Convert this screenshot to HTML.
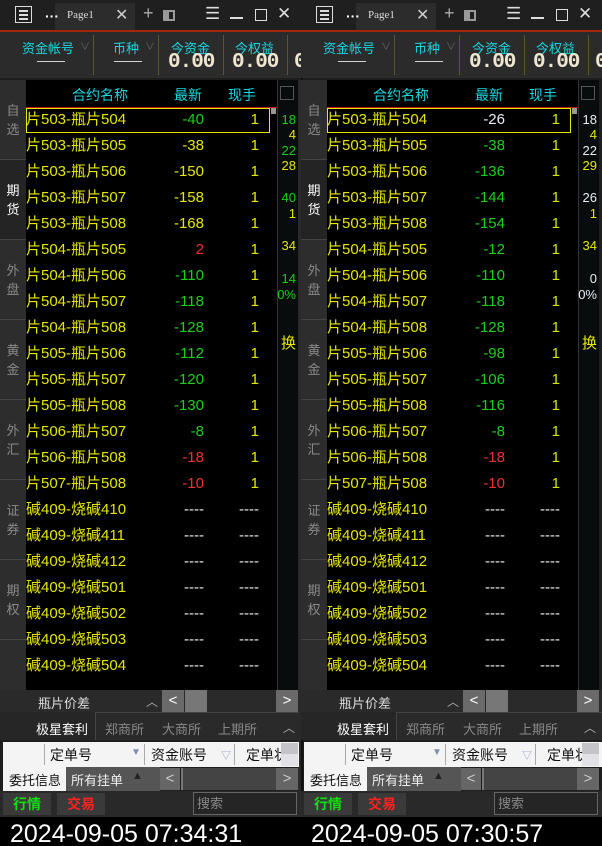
<!DOCTYPE html>
<html><head><meta charset="utf-8"><style>
*{margin:0;padding:0;box-sizing:border-box}
body{width:602px;height:846px;background:#000;position:relative;overflow:hidden;font-family:"Liberation Sans","Noto Sans CJK SC",sans-serif}
.p{position:absolute;top:0;width:301px;height:846px;overflow:hidden;background:#1e1e1e}
.a{position:absolute;white-space:nowrap}
.tb{left:0;top:0;width:301px;height:30px;background:#1f1f1f}
.red{left:0;top:30px;width:301px;height:2px;background:#a3260c}
.hd{left:0;top:32px;width:301px;height:46px;background:#2b2b2b}
.cy{color:#1ad6e0;font-size:13px}
.val{color:#efe6cf;font-size:21px;font-family:"Liberation Mono",monospace;font-weight:bold;letter-spacing:-1px}
.vd{width:1px;height:40px;top:35px;background:#5a5530}
.sb{left:0;top:80px;width:26px;height:610px;background:#2d2d2d}
.sbl{left:0;width:26px;height:80px;border-bottom:1px solid #444;color:#8a8a8a;font-size:13px;text-align:center;line-height:19px;padding-top:21px}
.tbl{left:26px;top:80px;width:251px;height:610px;background:#000}
.row{position:absolute;left:0;width:251px;height:26px;font-size:15px;line-height:26px}
.nm{position:absolute;left:0;color:#e6e600}
.v{position:absolute;right:73px;text-align:right}
.h{position:absolute;right:18px;text-align:right}
.g{color:#19d019}.y{color:#e6e600}.r{color:#f03030}.w{color:#e8eef5}
.nc{left:277px;top:80px;width:21px;height:610px;background:#080c0d;border-left:1px solid #333}
.nv{position:absolute;right:2px;font-size:13px}
.btn{background:#6a6a6a;color:#fff;text-align:center;font-size:15px;line-height:22px}
</style></head><body>

<!-- LEFT PANEL -->
<div class="p" style="left:0">
<div class="a tb"></div>
<div class="a" style="left:55px;top:3px;width:80px;height:27px;background:#2c2c2c"></div>
<div class="a" style="left:15px;top:6px;width:17px;height:17px;border:1.5px solid #ddd"></div>
<div class="a" style="left:19px;top:10px;width:9px;height:1.5px;background:#ddd;box-shadow:0 4px 0 #ddd,0 8px 0 #ddd"></div>
<div class="a" style="left:45px;top:8px;color:#fff;font-size:14px;font-weight:bold">···</div>
<div class="a" style="left:67px;top:9px;color:#ddd;font-size:11px;font-family:'Liberation Serif',serif">Page1</div>
<div class="a" style="left:115px;top:5px;color:#ccc;font-size:16px">✕</div>
<div class="a" style="left:143px;top:3px;color:#aaa;font-size:18px">+</div>
<div class="a" style="left:163px;top:10px;width:12px;height:11px;border:2px solid #999;border-left-width:6px"></div>
<div class="a" style="left:205px;top:4px;color:#ddd;font-size:17px">☰</div>
<div class="a" style="left:230px;top:17px;width:13px;height:2px;background:#ddd"></div>
<div class="a" style="left:255px;top:9px;width:12px;height:12px;border:1.5px solid #ddd"></div>
<div class="a" style="left:277px;top:4px;color:#ddd;font-size:17px">✕</div>
<div class="a red"></div>
<div class="a hd"></div>
<div class="a cy" style="left:22px;top:38px">资金帐号</div><div class="a" style="left:80px;top:38px;color:#666;font-size:10px">∨</div>
<div class="a" style="left:37px;top:52px;color:#ddd;font-size:14px">——</div>
<div class="a vd" style="left:93px"></div>
<div class="a cy" style="left:113px;top:38px">币种</div><div class="a" style="left:145px;top:38px;color:#666;font-size:10px">∨</div>
<div class="a" style="left:114px;top:52px;color:#ddd;font-size:14px">——</div>
<div class="a vd" style="left:158px"></div>
<div class="a cy" style="left:171px;top:38px">今资金</div>
<div class="a val" style="left:168px;top:51px">0.00</div>
<div class="a vd" style="left:223px"></div>
<div class="a cy" style="left:235px;top:38px">今权益</div>
<div class="a val" style="left:232px;top:51px">0.00</div>
<div class="a vd" style="left:287px"></div>
<div class="a val" style="left:294px;top:51px">0</div>

<div class="a sb">
<div class="a sbl" style="top:0">自<br>选</div>
<div class="a sbl" style="top:80px;color:#fff;background:#242424">期<br>货</div>
<div class="a sbl" style="top:160px">外<br>盘</div>
<div class="a sbl" style="top:240px">黄<br>金</div>
<div class="a sbl" style="top:320px">外<br>汇</div>
<div class="a sbl" style="top:400px">证<br>券</div>
<div class="a sbl" style="top:480px">期<br>权</div>
</div>

<div class="a tbl">
<div class="a cy" style="left:46px;top:5px;font-size:14px">合约名称</div>
<div class="a cy" style="left:148px;top:5px;font-size:14px">最新</div>
<div class="a cy" style="left:202px;top:5px;font-size:14px">现手</div>
<div class="a" style="left:0;top:27px;width:251px;height:1px;background:#c01818"></div>
<div class="a" style="left:245px;top:28px;width:5px;height:6px;background:#999"></div>
<div class="a" style="left:0;top:28px;width:244px;height:25px;border:1px solid #e6e600"></div>
<div class="row" style="top:27px"><span class="nm">片503-瓶片504</span><span class="v g">-40</span><span class="h y">1</span></div>
<div class="row" style="top:53px"><span class="nm">片503-瓶片505</span><span class="v y">-38</span><span class="h y">1</span></div>
<div class="row" style="top:79px"><span class="nm">片503-瓶片506</span><span class="v y">-150</span><span class="h y">1</span></div>
<div class="row" style="top:105px"><span class="nm">片503-瓶片507</span><span class="v y">-158</span><span class="h y">1</span></div>
<div class="row" style="top:131px"><span class="nm">片503-瓶片508</span><span class="v y">-168</span><span class="h y">1</span></div>
<div class="row" style="top:157px"><span class="nm">片504-瓶片505</span><span class="v r">2</span><span class="h y">1</span></div>
<div class="row" style="top:183px"><span class="nm">片504-瓶片506</span><span class="v g">-110</span><span class="h y">1</span></div>
<div class="row" style="top:209px"><span class="nm">片504-瓶片507</span><span class="v g">-118</span><span class="h y">1</span></div>
<div class="row" style="top:235px"><span class="nm">片504-瓶片508</span><span class="v g">-128</span><span class="h y">1</span></div>
<div class="row" style="top:261px"><span class="nm">片505-瓶片506</span><span class="v g">-112</span><span class="h y">1</span></div>
<div class="row" style="top:287px"><span class="nm">片505-瓶片507</span><span class="v g">-120</span><span class="h y">1</span></div>
<div class="row" style="top:313px"><span class="nm">片505-瓶片508</span><span class="v g">-130</span><span class="h y">1</span></div>
<div class="row" style="top:339px"><span class="nm">片506-瓶片507</span><span class="v g">-8</span><span class="h y">1</span></div>
<div class="row" style="top:365px"><span class="nm">片506-瓶片508</span><span class="v r">-18</span><span class="h y">1</span></div>
<div class="row" style="top:391px"><span class="nm">片507-瓶片508</span><span class="v r">-10</span><span class="h y">1</span></div>
<div class="row" style="top:417px"><span class="nm">碱409-烧碱410</span><span class="v w">----</span><span class="h w">----</span></div>
<div class="row" style="top:443px"><span class="nm">碱409-烧碱411</span><span class="v w">----</span><span class="h w">----</span></div>
<div class="row" style="top:469px"><span class="nm">碱409-烧碱412</span><span class="v w">----</span><span class="h w">----</span></div>
<div class="row" style="top:495px"><span class="nm">碱409-烧碱501</span><span class="v w">----</span><span class="h w">----</span></div>
<div class="row" style="top:521px"><span class="nm">碱409-烧碱502</span><span class="v w">----</span><span class="h w">----</span></div>
<div class="row" style="top:547px"><span class="nm">碱409-烧碱503</span><span class="v w">----</span><span class="h w">----</span></div>
<div class="row" style="top:573px"><span class="nm">碱409-烧碱504</span><span class="v w">----</span><span class="h w">----</span></div>
</div>

<div class="a nc">
<div class="a" style="left:2px;top:6px;width:14px;height:14px;border:1px solid #555"></div>
<div class="nv g" style="top:32px">18</div>
<div class="nv y" style="top:47px">4</div>
<div class="nv g" style="top:63px">22</div>
<div class="nv y" style="top:78px">28</div>
<div class="nv g" style="top:110px">40</div>
<div class="nv y" style="top:126px">1</div>
<div class="nv y" style="top:158px">34</div>
<div class="nv g" style="top:191px">14</div>
<div class="nv g" style="top:207px">0%</div>
<div class="nv y" style="top:252px;font-size:15px">换</div>
</div>
<div class="a" style="left:298px;top:80px;width:3px;height:766px;background:#2a2a2a"></div>

<div class="a" style="left:0;top:690px;width:299px;height:22px;background:#2a2a2a"></div>
<div class="a" style="left:38px;top:693px;color:#ddd;font-size:13px">瓶片价差</div>
<div class="a" style="left:146px;top:693px;color:#aaa;font-size:12px">︿</div>
<div class="a btn" style="left:162px;top:690px;width:22px;height:22px">&lt;</div>
<div class="a" style="left:185px;top:690px;width:22px;height:22px;background:#777"></div>
<div class="a btn" style="left:276px;top:690px;width:22px;height:22px">&gt;</div>
<div class="a" style="left:0;top:712px;width:299px;height:28px;background:#262626"></div>
<div class="a" style="left:95px;top:712px;width:204px;height:28px;background:#2a2a2a;border-top:1px solid #444;border-left:1px solid #444"></div>
<div class="a" style="left:36px;top:719px;color:#fff;font-size:13px">极星套利</div>
<div class="a" style="left:105px;top:719px;color:#888;font-size:13px">郑商所</div>
<div class="a" style="left:162px;top:719px;color:#888;font-size:13px">大商所</div>
<div class="a" style="left:218px;top:719px;color:#888;font-size:13px">上期所</div>
<div class="a" style="left:283px;top:719px;color:#aaa;font-size:12px">︿</div>
<div class="a" style="left:3px;top:742px;width:296px;height:25px;background:#f4f4f4"></div>
<div class="a" style="left:44px;top:744px;width:1px;height:21px;background:#aaa"></div>
<div class="a" style="left:50px;top:745px;color:#111;font-size:14px">定单号</div>
<div class="a" style="left:131px;top:747px;color:#7f8fb0;font-size:10px">▼</div>
<div class="a" style="left:144px;top:744px;width:1px;height:21px;background:#aaa"></div>
<div class="a" style="left:151px;top:745px;color:#111;font-size:14px">资金账号</div>
<div class="a" style="left:221px;top:747px;color:#8fa0c0;font-size:10px">▽</div>
<div class="a" style="left:234px;top:744px;width:1px;height:21px;background:#aaa"></div>
<div class="a" style="left:246px;top:745px;color:#111;font-size:14px;width:35px;overflow:hidden">定单状</div>
<div class="a" style="left:281px;top:743px;width:17px;height:11px;background:#c4c4c8"></div>
<div class="a" style="left:281px;top:754px;width:17px;height:12px;background:#e2e2e6"></div>
<div class="a" style="left:3px;top:767px;width:63px;height:24px;background:#f4f4f4"></div>
<div class="a" style="left:9px;top:770px;color:#111;font-size:13px">委托信息</div>
<div class="a" style="left:66px;top:767px;width:94px;height:24px;background:#555"></div>
<div class="a" style="left:71px;top:770px;color:#eee;font-size:13px">所有挂单</div>
<div class="a" style="left:132px;top:770px;color:#222;font-size:11px">▲</div>
<div class="a btn" style="left:160px;top:768px;width:20px;height:22px;background:#666;color:#ccc">&lt;</div>
<div class="a" style="left:181px;top:768px;width:95px;height:22px;background:#444;border-left:2px solid #777"></div>
<div class="a btn" style="left:276px;top:768px;width:22px;height:22px;background:#666;color:#ccc">&gt;</div>
<div class="a" style="left:0;top:791px;width:299px;height:26px;background:#292929"></div>
<div class="a" style="left:3px;top:793px;width:48px;height:22px;background:#3a3a3a;color:#10e010;font-size:14px;font-weight:bold;text-align:center;line-height:22px">行情</div>
<div class="a" style="left:57px;top:793px;width:48px;height:22px;background:#3a3a3a;color:#ff2020;font-size:14px;font-weight:bold;text-align:center;line-height:22px">交易</div>
<div class="a" style="left:193px;top:792px;width:104px;height:23px;border:1px solid #666;background:#252525;color:#888;font-size:13px;padding-left:3px;line-height:21px">搜索</div>
<div class="a" style="left:0;top:817px;width:301px;height:29px;background:#000"></div>
<div class="a" style="left:10px;top:820px;color:#fff;font-size:25px">2024-09-05 07:34:31</div>
</div>

<!-- RIGHT PANEL -->
<div class="p" style="left:301px">
<div class="a" style="left:0;top:0;width:2px;height:846px;background:#111"></div>
<div class="a tb"></div>
<div class="a" style="left:55px;top:3px;width:80px;height:27px;background:#2c2c2c"></div>
<div class="a" style="left:15px;top:6px;width:17px;height:17px;border:1.5px solid #ddd"></div>
<div class="a" style="left:19px;top:10px;width:9px;height:1.5px;background:#ddd;box-shadow:0 4px 0 #ddd,0 8px 0 #ddd"></div>
<div class="a" style="left:45px;top:8px;color:#fff;font-size:14px;font-weight:bold">···</div>
<div class="a" style="left:67px;top:9px;color:#ddd;font-size:11px;font-family:'Liberation Serif',serif">Page1</div>
<div class="a" style="left:115px;top:5px;color:#ccc;font-size:16px">✕</div>
<div class="a" style="left:143px;top:3px;color:#aaa;font-size:18px">+</div>
<div class="a" style="left:163px;top:10px;width:12px;height:11px;border:2px solid #999;border-left-width:6px"></div>
<div class="a" style="left:205px;top:4px;color:#ddd;font-size:17px">☰</div>
<div class="a" style="left:230px;top:17px;width:13px;height:2px;background:#ddd"></div>
<div class="a" style="left:255px;top:9px;width:12px;height:12px;border:1.5px solid #ddd"></div>
<div class="a" style="left:277px;top:4px;color:#ddd;font-size:17px">✕</div>
<div class="a red"></div>
<div class="a hd"></div>
<div class="a cy" style="left:22px;top:38px">资金帐号</div><div class="a" style="left:80px;top:38px;color:#666;font-size:10px">∨</div>
<div class="a" style="left:37px;top:52px;color:#ddd;font-size:14px">——</div>
<div class="a vd" style="left:93px"></div>
<div class="a cy" style="left:113px;top:38px">币种</div><div class="a" style="left:145px;top:38px;color:#666;font-size:10px">∨</div>
<div class="a" style="left:114px;top:52px;color:#ddd;font-size:14px">——</div>
<div class="a vd" style="left:158px"></div>
<div class="a cy" style="left:171px;top:38px">今资金</div>
<div class="a val" style="left:168px;top:51px">0.00</div>
<div class="a vd" style="left:223px"></div>
<div class="a cy" style="left:235px;top:38px">今权益</div>
<div class="a val" style="left:232px;top:51px">0.00</div>
<div class="a vd" style="left:287px"></div>
<div class="a val" style="left:294px;top:51px">0</div>

<div class="a sb">
<div class="a sbl" style="top:0">自<br>选</div>
<div class="a sbl" style="top:80px;color:#fff;background:#242424">期<br>货</div>
<div class="a sbl" style="top:160px">外<br>盘</div>
<div class="a sbl" style="top:240px">黄<br>金</div>
<div class="a sbl" style="top:320px">外<br>汇</div>
<div class="a sbl" style="top:400px">证<br>券</div>
<div class="a sbl" style="top:480px">期<br>权</div>
</div>

<div class="a tbl">
<div class="a cy" style="left:46px;top:5px;font-size:14px">合约名称</div>
<div class="a cy" style="left:148px;top:5px;font-size:14px">最新</div>
<div class="a cy" style="left:202px;top:5px;font-size:14px">现手</div>
<div class="a" style="left:0;top:27px;width:251px;height:1px;background:#c01818"></div>
<div class="a" style="left:245px;top:28px;width:5px;height:6px;background:#999"></div>
<div class="a" style="left:0;top:28px;width:244px;height:25px;border:1px solid #e6e600"></div>
<div class="row" style="top:27px"><span class="nm">片503-瓶片504</span><span class="v w">-26</span><span class="h" style="color:#d4e600">1</span></div>
<div class="row" style="top:53px"><span class="nm">片503-瓶片505</span><span class="v g">-38</span><span class="h" style="color:#d4e600">1</span></div>
<div class="row" style="top:79px"><span class="nm">片503-瓶片506</span><span class="v g">-136</span><span class="h" style="color:#d4e600">1</span></div>
<div class="row" style="top:105px"><span class="nm">片503-瓶片507</span><span class="v g">-144</span><span class="h" style="color:#d4e600">1</span></div>
<div class="row" style="top:131px"><span class="nm">片503-瓶片508</span><span class="v g">-154</span><span class="h" style="color:#d4e600">1</span></div>
<div class="row" style="top:157px"><span class="nm">片504-瓶片505</span><span class="v g">-12</span><span class="h" style="color:#d4e600">1</span></div>
<div class="row" style="top:183px"><span class="nm">片504-瓶片506</span><span class="v g">-110</span><span class="h" style="color:#d4e600">1</span></div>
<div class="row" style="top:209px"><span class="nm">片504-瓶片507</span><span class="v g">-118</span><span class="h" style="color:#d4e600">1</span></div>
<div class="row" style="top:235px"><span class="nm">片504-瓶片508</span><span class="v g">-128</span><span class="h" style="color:#d4e600">1</span></div>
<div class="row" style="top:261px"><span class="nm">片505-瓶片506</span><span class="v g">-98</span><span class="h" style="color:#d4e600">1</span></div>
<div class="row" style="top:287px"><span class="nm">片505-瓶片507</span><span class="v g">-106</span><span class="h" style="color:#d4e600">1</span></div>
<div class="row" style="top:313px"><span class="nm">片505-瓶片508</span><span class="v g">-116</span><span class="h" style="color:#d4e600">1</span></div>
<div class="row" style="top:339px"><span class="nm">片506-瓶片507</span><span class="v g">-8</span><span class="h" style="color:#d4e600">1</span></div>
<div class="row" style="top:365px"><span class="nm">片506-瓶片508</span><span class="v r">-18</span><span class="h" style="color:#d4e600">1</span></div>
<div class="row" style="top:391px"><span class="nm">片507-瓶片508</span><span class="v r">-10</span><span class="h" style="color:#d4e600">1</span></div>
<div class="row" style="top:417px"><span class="nm">碱409-烧碱410</span><span class="v w">----</span><span class="h w">----</span></div>
<div class="row" style="top:443px"><span class="nm">碱409-烧碱411</span><span class="v w">----</span><span class="h w">----</span></div>
<div class="row" style="top:469px"><span class="nm">碱409-烧碱412</span><span class="v w">----</span><span class="h w">----</span></div>
<div class="row" style="top:495px"><span class="nm">碱409-烧碱501</span><span class="v w">----</span><span class="h w">----</span></div>
<div class="row" style="top:521px"><span class="nm">碱409-烧碱502</span><span class="v w">----</span><span class="h w">----</span></div>
<div class="row" style="top:547px"><span class="nm">碱409-烧碱503</span><span class="v w">----</span><span class="h w">----</span></div>
<div class="row" style="top:573px"><span class="nm">碱409-烧碱504</span><span class="v w">----</span><span class="h w">----</span></div>
</div>

<div class="a nc">
<div class="a" style="left:2px;top:6px;width:14px;height:14px;border:1px solid #555"></div>
<div class="nv w" style="top:32px">18</div>
<div class="nv y" style="top:47px">4</div>
<div class="nv w" style="top:63px">22</div>
<div class="nv y" style="top:78px">29</div>
<div class="nv w" style="top:110px">26</div>
<div class="nv y" style="top:126px">1</div>
<div class="nv y" style="top:158px">34</div>
<div class="nv w" style="top:191px">0</div>
<div class="nv w" style="top:207px">0%</div>
<div class="nv y" style="top:252px;font-size:15px">换</div>
</div>

<div class="a" style="left:0;top:690px;width:301px;height:22px;background:#2a2a2a"></div>
<div class="a" style="left:38px;top:693px;color:#ddd;font-size:13px">瓶片价差</div>
<div class="a" style="left:146px;top:693px;color:#aaa;font-size:12px">︿</div>
<div class="a btn" style="left:162px;top:690px;width:22px;height:22px">&lt;</div>
<div class="a" style="left:185px;top:690px;width:22px;height:22px;background:#777"></div>
<div class="a btn" style="left:276px;top:690px;width:22px;height:22px">&gt;</div>
<div class="a" style="left:0;top:712px;width:301px;height:28px;background:#262626"></div>
<div class="a" style="left:95px;top:712px;width:206px;height:28px;background:#2a2a2a;border-top:1px solid #444;border-left:1px solid #444"></div>
<div class="a" style="left:36px;top:719px;color:#fff;font-size:13px">极星套利</div>
<div class="a" style="left:105px;top:719px;color:#888;font-size:13px">郑商所</div>
<div class="a" style="left:162px;top:719px;color:#888;font-size:13px">大商所</div>
<div class="a" style="left:218px;top:719px;color:#888;font-size:13px">上期所</div>
<div class="a" style="left:283px;top:719px;color:#aaa;font-size:12px">︿</div>
<div class="a" style="left:3px;top:742px;width:298px;height:25px;background:#f4f4f4"></div>
<div class="a" style="left:44px;top:744px;width:1px;height:21px;background:#aaa"></div>
<div class="a" style="left:50px;top:745px;color:#111;font-size:14px">定单号</div>
<div class="a" style="left:131px;top:747px;color:#7f8fb0;font-size:10px">▼</div>
<div class="a" style="left:144px;top:744px;width:1px;height:21px;background:#aaa"></div>
<div class="a" style="left:151px;top:745px;color:#111;font-size:14px">资金账号</div>
<div class="a" style="left:221px;top:747px;color:#8fa0c0;font-size:10px">▽</div>
<div class="a" style="left:234px;top:744px;width:1px;height:21px;background:#aaa"></div>
<div class="a" style="left:246px;top:745px;color:#111;font-size:14px;width:35px;overflow:hidden">定单状</div>
<div class="a" style="left:281px;top:743px;width:17px;height:11px;background:#c4c4c8"></div>
<div class="a" style="left:281px;top:754px;width:17px;height:12px;background:#e2e2e6"></div>
<div class="a" style="left:3px;top:767px;width:63px;height:24px;background:#f4f4f4"></div>
<div class="a" style="left:9px;top:770px;color:#111;font-size:13px">委托信息</div>
<div class="a" style="left:66px;top:767px;width:94px;height:24px;background:#555"></div>
<div class="a" style="left:71px;top:770px;color:#eee;font-size:13px">所有挂单</div>
<div class="a" style="left:132px;top:770px;color:#222;font-size:11px">▲</div>
<div class="a btn" style="left:160px;top:768px;width:20px;height:22px;background:#666;color:#ccc">&lt;</div>
<div class="a" style="left:181px;top:768px;width:95px;height:22px;background:#444;border-left:2px solid #777"></div>
<div class="a btn" style="left:276px;top:768px;width:22px;height:22px;background:#666;color:#ccc">&gt;</div>
<div class="a" style="left:0;top:791px;width:301px;height:26px;background:#292929"></div>
<div class="a" style="left:3px;top:793px;width:48px;height:22px;background:#3a3a3a;color:#10e010;font-size:14px;font-weight:bold;text-align:center;line-height:22px">行情</div>
<div class="a" style="left:57px;top:793px;width:48px;height:22px;background:#3a3a3a;color:#ff2020;font-size:14px;font-weight:bold;text-align:center;line-height:22px">交易</div>
<div class="a" style="left:193px;top:792px;width:104px;height:23px;border:1px solid #666;background:#252525;color:#888;font-size:13px;padding-left:3px;line-height:21px">搜索</div>
<div class="a" style="left:0;top:817px;width:301px;height:29px;background:#000"></div>
<div class="a" style="left:10px;top:820px;color:#fff;font-size:25px">2024-09-05 07:30:57</div>
</div>
</body></html>
